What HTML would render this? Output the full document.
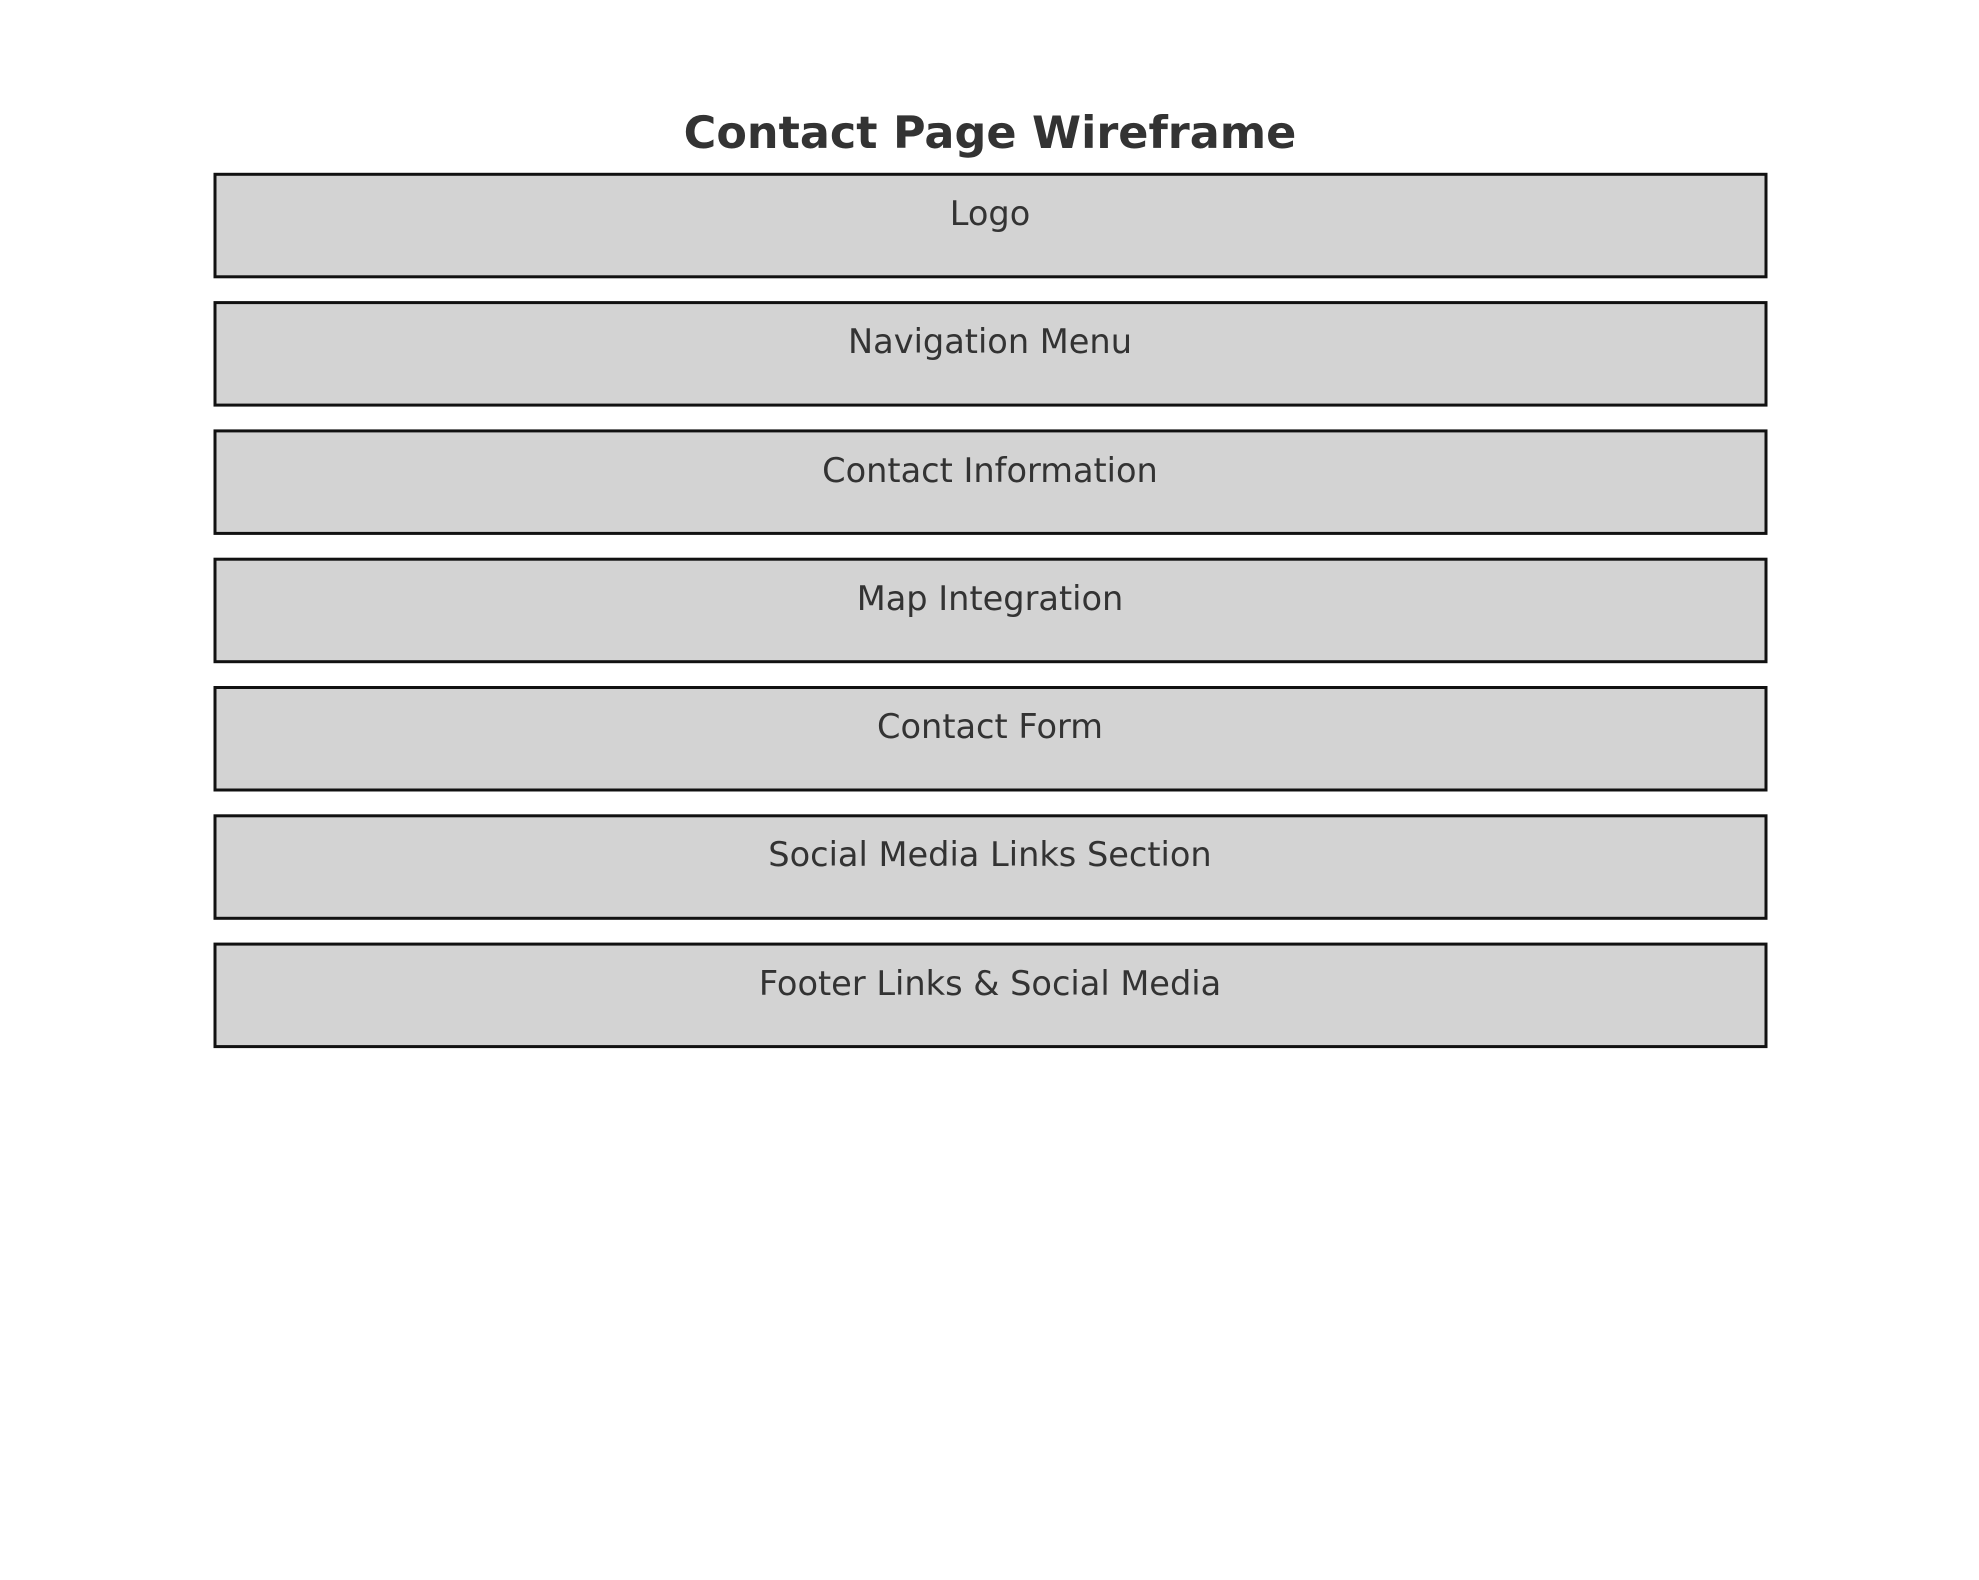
<!DOCTYPE html>
<html><head><meta charset="utf-8"><style>
html,body{margin:0;padding:0;background:#fff;width:1979px;height:1580px;overflow:hidden}
svg{display:block}
text{font-family:"DejaVu Sans","Liberation Sans",sans-serif;fill:#333}
</style></head><body>
<svg width="1979" height="1580" xmlns="http://www.w3.org/2000/svg">
<text x="990" y="148" text-anchor="middle" font-size="44.5" font-weight="bold">Contact Page Wireframe</text>
<g fill="#d3d3d3" stroke="#111" stroke-width="3">
<rect x="215" y="174.3" width="1551" height="102.5"/>
<rect x="215" y="302.6" width="1551" height="102.5"/>
<rect x="215" y="430.9" width="1551" height="102.5"/>
<rect x="215" y="559.2" width="1551" height="102.5"/>
<rect x="215" y="687.5" width="1551" height="102.5"/>
<rect x="215" y="815.8" width="1551" height="102.5"/>
<rect x="215" y="944.1" width="1551" height="102.5"/>
</g>
<g font-size="33.6" text-anchor="middle">
<text x="990" y="225">Logo</text>
<text x="990" y="353">Navigation Menu</text>
<text x="990" y="482">Contact Information</text>
<text x="990" y="610">Map Integration</text>
<text x="990" y="738">Contact Form</text>
<text x="990" y="866">Social Media Links Section</text>
<text x="990" y="995">Footer Links &amp; Social Media</text>
</g>
</svg>
</body></html>
